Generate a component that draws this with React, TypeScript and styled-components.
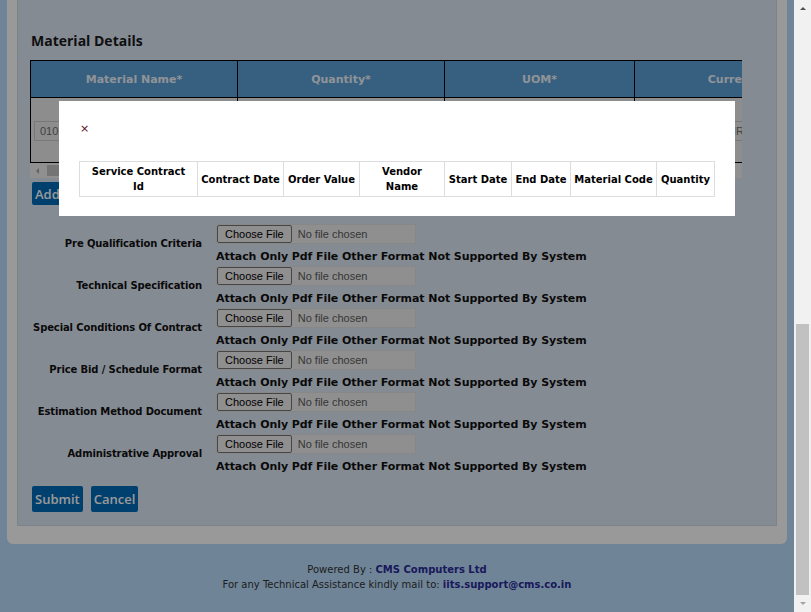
import React from "react";
import styled, { createGlobalStyle } from "styled-components";

const GlobalStyle = createGlobalStyle`
  html, body { margin: 0; padding: 0; overflow: hidden; }
  body { font-family: "DejaVu Sans", Verdana, sans-serif; color: #111; }
  * { box-sizing: border-box; }
`;

const Viewport = styled.div`
  display: flex;
  width: 811px;
  height: 612px;
  overflow: hidden;
`;

const Page = styled.div`
  position: relative;
  flex: 1;
  min-width: 0;
  background: #b9dcfc;
  display: flex;
  flex-direction: column;
`;

const Panel = styled.div`
  margin: 0 7px;
  background: #ffffff;
  padding: 0 10px 18px;
  border-radius: 0 0 6px 6px;
`;

const Inner = styled.div`
  background: #dee8f5;
  border: 1px solid #d0dae8;
  border-top: none;
  padding: 31px 12px 13px;
`;

const SectionTitle = styled.h3`
  margin: 0 0 9px 1px;
  font-family: "Open Sans", "DejaVu Sans", sans-serif;
  font-weight: 700;
  font-size: 14px;
  line-height: 20px;
  color: #1a1a1a;
`;

const Scroller = styled.div`
  width: 712px;
`;

const Clip = styled.div`
  overflow: hidden;
  width: 712px;
`;

const MaterialTable = styled.table`
  border-collapse: collapse;
  table-layout: fixed;
  width: 1262px;
`;

const HeadCell = styled.th`
  height: 37px;
  padding: 0;
  background: #5a9ed5;
  color: #eef6fc;
  border: 1px solid #000;
  font-family: "DejaVu Sans", Verdana, sans-serif;
  font-weight: 700;
  font-size: 11px;
  text-align: center;
`;

const BodyCell = styled.td`
  height: 65px;
  padding: 0 3px;
  background: #ebebeb;
  border: 1px solid #000;
  vertical-align: middle;
`;

const CellInput = styled.input<{ $center?: boolean }>`
  width: 100%;
  height: 20px;
  padding: ${(p) => (p.$center ? "0 8px 0 0" : "0 5px")};
  border: 1px solid #c8c8c8;
  background: #ececec;
  color: #6e6e6e;
  font-family: "Liberation Sans", Arial, sans-serif;
  font-size: 11px;
  text-align: ${(p) => (p.$center ? "center" : "left")};
`;

const HBar = styled.div`
  display: flex;
  height: 15px;
  background: #f1f1f1;
`;

const HArrow = styled.div`
  width: 15px;
  display: flex;
  align-items: center;
  justify-content: center;
  &::before {
    content: "";
    border-top: 3px solid transparent;
    border-bottom: 3px solid transparent;
    border-right: 3px solid #a3a3a3;
  }
`;

const HThumb = styled.div`
  margin: 2px 0 2px 2px;
  width: 440px;
  background: #c1c1c1;
`;

const AddButton = styled.button`
  display: block;
  margin: 4px 0 0 2px;
  height: 23px;
  padding: 0 3px;
  border: none;
  border-radius: 2px;
  background: #006bb9;
  color: #ffffff;
  font-family: "Open Sans", sans-serif;
  font-weight: 600;
  font-size: 13px;
`;

const UploadGrid = styled.div`
  display: grid;
  grid-template-columns: 172px 1fr;
  column-gap: 14px;
  row-gap: 2px;
  margin-top: 19px;
`;

const UploadLabel = styled.div`
  align-self: center;
  text-align: right;
  font-weight: 700;
  font-size: 10px;
  line-height: 14px;
  letter-spacing: -0.12px;
  white-space: nowrap;
  color: #111;
`;

const UploadField = styled.div`
  display: flex;
  flex-direction: column;
  gap: 6px;
`;

const FileInput = styled.input`
  width: 200px;
  height: 20px;
  padding: 0;
  background: #eeeeee;
  border: 1px solid #e2e2e2;
  font-family: "Liberation Sans", Arial, sans-serif;
  font-size: 11px;
  color: #5c5c5c;
  &::file-selector-button {
    height: 18px;
    margin: 0 6px 0 0;
    padding: 0 7px;
    font-family: "Liberation Sans", Arial, sans-serif;
    font-size: 11px;
    color: #000;
    background: #efefef;
    border: 1px solid #767676;
    border-radius: 2px;
  }
`;

const Note = styled.div`
  font-weight: 700;
  font-size: 11px;
  line-height: 14px;
  letter-spacing: -0.07px;
  color: #111;
  white-space: nowrap;
`;

const Actions = styled.div`
  display: flex;
  gap: 8px;
  margin: 12px 0 0 2px;
`;

const ActionButton = styled.button`
  height: 26px;
  padding: 0 3px;
  border: none;
  border-radius: 2px;
  background: #006bb9;
  color: #ffffff;
  font-family: "Open Sans", sans-serif;
  font-weight: 600;
  font-size: 13px;
`;

const Footer = styled.div`
  padding-top: 18px;
  text-align: center;
  font-size: 10px;
  line-height: 15px;
  color: #333;
`;

const FooterStrong = styled.b`
  color: #2b2b98;
`;

const Backdrop = styled.div`
  position: fixed;
  left: 0;
  top: 0;
  bottom: 0;
  right: 17px;
  background: rgba(0, 0, 0, 0.4);
`;

const Modal = styled.div`
  position: fixed;
  left: 59px;
  top: 101px;
  width: 676px;
  height: 115px;
  background: #ffffff;
  padding: 20px 20px 0;
`;

const Close = styled.div`
  font-size: 11px;
  line-height: 15px;
  color: #5e0b1c;
  padding-left: 1px;
`;

const ResultTable = styled.table`
  margin-top: 25px;
  border-collapse: collapse;
  table-layout: fixed;
  width: 636px;
`;

const ResultHead = styled.th`
  padding: 2px 0;
  border: 1px solid #dddddd;
  font-weight: 700;
  font-size: 10px;
  line-height: 15px;
  color: #000;
  text-align: center;
  white-space: nowrap;
`;

const VScroll = styled.div`
  width: 17px;
  background: #f1f1f1;
  display: flex;
  flex-direction: column;
`;

const VArrow = styled.div<{ $dir: "up" | "down"; $active?: boolean }>`
  height: 17px;
  display: flex;
  align-items: center;
  justify-content: center;
  &::before {
    content: "";
    border-left: 3px solid transparent;
    border-right: 3px solid transparent;
    ${(p) =>
      p.$dir === "up"
        ? `border-bottom: 3px solid ${p.$active ? "#505050" : "#a3a3a3"};`
        : `border-top: 3px solid ${p.$active ? "#505050" : "#a3a3a3"};`}
  }
`;

const VTrack = styled.div`
  flex: 1;
  display: flex;
  flex-direction: column;
  justify-content: flex-end;
  padding: 0 2px;
`;

const VThumb = styled.div`
  height: 271px;
  background: #c1c1c1;
`;

const materialColumns = [
  { title: "Material Name*", width: 207 },
  { title: "Quantity*", width: 207 },
  { title: "UOM*", width: 190 },
  { title: "Currency*", width: 208 },
  { title: "Rate*", width: 150 },
  { title: "Amount", width: 150 },
  { title: "Action", width: 150 },
];

const materialValues = ["0101010001 - Cement", "10", "Nos", "INR", "250", "2500", ""];

const uploads = [
  "Pre Qualification Criteria",
  "Technical Specification",
  "Special Conditions Of Contract",
  "Price Bid / Schedule Format",
  "Estimation Method Document",
  "Administrative Approval",
];

const resultColumns: { label: React.ReactNode; width: number }[] = [
  { label: (<>Service Contract<br />Id</>), width: 118 },
  { label: "Contract Date", width: 86 },
  { label: "Order Value", width: 76 },
  { label: (<>Vendor<br />Name</>), width: 85 },
  { label: "Start Date", width: 67 },
  { label: "End Date", width: 59 },
  { label: "Material Code", width: 86 },
  { label: "Quantity", width: 58 },
];

export default function App() {
  return (
    <>
      <GlobalStyle />
      <Viewport>
        <Page>
          <Panel>
            <Inner>
              <SectionTitle>Material Details</SectionTitle>
              <Scroller>
                <Clip>
                  <MaterialTable>
                    <colgroup>
                      {materialColumns.map((c) => (
                        <col key={c.title} style={{ width: c.width }} />
                      ))}
                    </colgroup>
                    <thead>
                      <tr>
                        {materialColumns.map((c) => (
                          <HeadCell key={c.title}>{c.title}</HeadCell>
                        ))}
                      </tr>
                    </thead>
                    <tbody>
                      <tr>
                        {materialValues.map((v, i) => (
                          <BodyCell key={i}>
                            {i < 6 && <CellInput readOnly value={v} $center={i === 3} />}
                          </BodyCell>
                        ))}
                      </tr>
                    </tbody>
                  </MaterialTable>
                </Clip>
                <HBar>
                  <HArrow />
                  <HThumb />
                </HBar>
              </Scroller>
              <AddButton>Add Row</AddButton>
              <UploadGrid>
                {uploads.map((u) => (
                  <React.Fragment key={u}>
                    <UploadLabel>{u}</UploadLabel>
                    <UploadField>
                      <FileInput type="file" />
                      <Note>Attach Only Pdf File Other Format Not Supported By System</Note>
                    </UploadField>
                  </React.Fragment>
                ))}
              </UploadGrid>
              <Actions>
                <ActionButton>Submit</ActionButton>
                <ActionButton>Cancel</ActionButton>
              </Actions>
            </Inner>
          </Panel>
          <Footer>
            Powered By : <FooterStrong>CMS Computers Ltd</FooterStrong>
            <br />
            For any Technical Assistance kindly mail to: <FooterStrong>iits.support@cms.co.in</FooterStrong>
          </Footer>
          <Backdrop />
          <Modal>
            <Close>×</Close>
            <ResultTable>
              <colgroup>
                {resultColumns.map((c, i) => (
                  <col key={i} style={{ width: c.width }} />
                ))}
              </colgroup>
              <thead>
                <tr>
                  {resultColumns.map((c, i) => (
                    <ResultHead key={i}>{c.label}</ResultHead>
                  ))}
                </tr>
              </thead>
            </ResultTable>
          </Modal>
        </Page>
        <VScroll>
          <VArrow $dir="up" $active />
          <VTrack>
            <VThumb />
          </VTrack>
          <VArrow $dir="down" />
        </VScroll>
      </Viewport>
    </>
  );
}
